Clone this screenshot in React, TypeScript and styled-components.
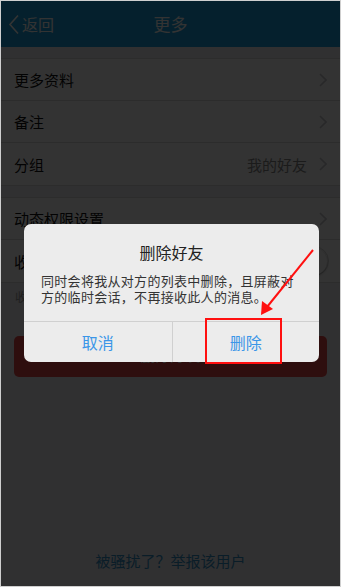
import React from "react";
import styled, { createGlobalStyle } from "styled-components";

const Global = createGlobalStyle`
  html, body { margin: 0; padding: 0; background: #333; }
  * { box-sizing: border-box; }
  body { font-family: "Noto Sans CJK SC", "Noto Sans", sans-serif; }
`;

const Screen = styled.div`
  position: relative;
  width: 341px;
  height: 587px;
  overflow: hidden;
  border: 1px solid #cfcfcf;
  background: #efeff4;
  display: flex;
  flex-direction: column;
`;

const Header = styled.div`
  height: 46px;
  flex: none;
  background: #1aa0de;
  display: grid;
  grid-template-columns: 1fr auto 1fr;
  align-items: center;
  color: #fff;
`;

const Back = styled.div`
  display: flex;
  align-items: center;
  gap: 2px;
  padding-left: 7px;
  font-size: 16px;
  line-height: 20px;
`;

const Title = styled.div`
  font-size: 17px;
  line-height: 22px;
`;

const Section = styled.div`
  margin-top: 11px;
  background: #fff;
  border-top: 1px solid #d9d9d9;
  border-bottom: 1px solid #d9d9d9;
  display: flex;
  flex-direction: column;
`;

const Row = styled.div<{ $last?: boolean }>`
  height: 42px;
  display: flex;
  align-items: center;
  padding: 0 13px 0 13px;
  border-bottom: ${(p) => (p.$last ? "none" : "1px solid #dcdcdc")};
  font-size: 15px;
  color: #111;
`;

const Label = styled.span`
  flex: 1;
`;

const Value = styled.span`
  color: #888;
  font-size: 15px;
  margin-right: 12px;
`;

const Switch = styled.div`
  width: 50px;
  height: 30px;
  border-radius: 15px;
  border: 1.5px solid #d8d8d8;
  background: #fff;
  display: flex;
  justify-content: flex-end;
  align-items: center;
  padding: 1px;
  margin-right: -2px;
`;

const Knob = styled.div`
  width: 27px;
  height: 27px;
  border-radius: 50%;
  background: #fff;
  box-shadow: 0 1px 3px rgba(0, 0, 0, 0.35);
`;

const Desc = styled.div`
  padding: 6px 14px 0;
  font-size: 12px;
  line-height: 16px;
  color: #999;
`;

const DangerButton = styled.div`
  margin: 31px 13px 0 13px;
  height: 41px;
  padding-bottom: 4px;
  border-radius: 5px;
  background: #e64848;
  color: #fff;
  font-size: 15px;
  display: flex;
  align-items: center;
  justify-content: center;
`;

const Footer = styled.div`
  margin-top: auto;
  padding-bottom: 15px;
  text-align: center;
  font-size: 15px;
  line-height: 20px;
  color: #3592c8;
`;

const Dim = styled.div`
  position: absolute;
  inset: 0;
  background: rgba(0, 0, 0, 0.8);
`;

const Dialog = styled.div`
  position: absolute;
  left: 23px;
  top: 223px;
  width: 295px;
  border-radius: 7px;
  background: #ececec;
  display: flex;
  flex-direction: column;
  overflow: hidden;
`;

const DialogTitle = styled.div`
  padding-top: 17px;
  text-align: center;
  font-size: 16px;
  line-height: 22px;
  color: #222;
`;

const DialogBody = styled.div`
  padding: 10px 22px 16px 17px;
  font-size: 13px;
  line-height: 16px;
  letter-spacing: 0.3px;
  color: #333;
`;

const DialogActions = styled.div`
  display: grid;
  grid-template-columns: 1fr 1fr;
  border-top: 1px solid #d0d0d0;
  height: 41px;
`;

const Action = styled.div<{ $divider?: boolean }>`
  display: flex;
  align-items: center;
  justify-content: center;
  font-size: 16px;
  color: #3b96e8;
  border-left: ${(p) => (p.$divider ? "1px solid #d0d0d0" : "none")};
`;

const Highlight = styled.div`
  position: absolute;
  left: 204px;
  top: 317px;
  width: 77px;
  height: 46px;
  border: 2px solid #ff1010;
`;

const ArrowLayer = styled.svg`
  position: absolute;
  left: 0;
  top: 0;
  pointer-events: none;
`;

const Chevron = ({ color, w, h }: { color: string; w: number; h: number }) => (
  <svg width={w} height={h} viewBox={`0 0 ${w} ${h}`}>
    <polyline
      points={`${w - 2},1.5 2,${h / 2} ${w - 2},${h - 1.5}`}
      fill="none"
      stroke={color}
      strokeWidth="1.6"
    />
  </svg>
);

const RightChevron = () => (
  <svg width="8" height="14" viewBox="0 0 8 14">
    <polyline points="1,1 7,7 1,13" fill="none" stroke="#c7c7cc" strokeWidth="1.6" />
  </svg>
);

export default function App() {
  return (
    <>
      <Global />
      <Screen>
        <Header>
          <Back>
            <Chevron color="#fff" w={12} h={21} />
            <span>返回</span>
          </Back>
          <Title>更多</Title>
          <div />
        </Header>
        <Section>
          <Row>
            <Label>更多资料</Label>
            <RightChevron />
          </Row>
          <Row>
            <Label>备注</Label>
            <RightChevron />
          </Row>
          <Row $last>
            <Label>分组</Label>
            <Value>我的好友</Value>
            <RightChevron />
          </Row>
        </Section>
        <Section>
          <Row>
            <Label>动态权限设置</Label>
            <RightChevron />
          </Row>
          <Row $last>
            <Label>收到此人消息提醒</Label>
            <Switch>
              <Knob />
            </Switch>
          </Row>
        </Section>
        <Desc>收到消息提醒</Desc>
        <DangerButton>删除好友</DangerButton>
        <Footer>被骚扰了？举报该用户</Footer>

        <Dim />
        <Dialog>
          <DialogTitle>删除好友</DialogTitle>
          <DialogBody>
            同时会将我从对方的列表中删除，且屏蔽对方的临时会话，不再接收此人的消息。
          </DialogBody>
          <DialogActions>
            <Action>取消</Action>
            <Action $divider>删除</Action>
          </DialogActions>
        </Dialog>
        <Highlight />
        <ArrowLayer width="341" height="587" viewBox="0 0 341 587">
          <line x1="312" y1="249" x2="266" y2="306" stroke="#ff1010" strokeWidth="2" />
          <polygon points="260,314 261,300 272,308" fill="#ff1010" />
        </ArrowLayer>
      </Screen>
    </>
  );
}
